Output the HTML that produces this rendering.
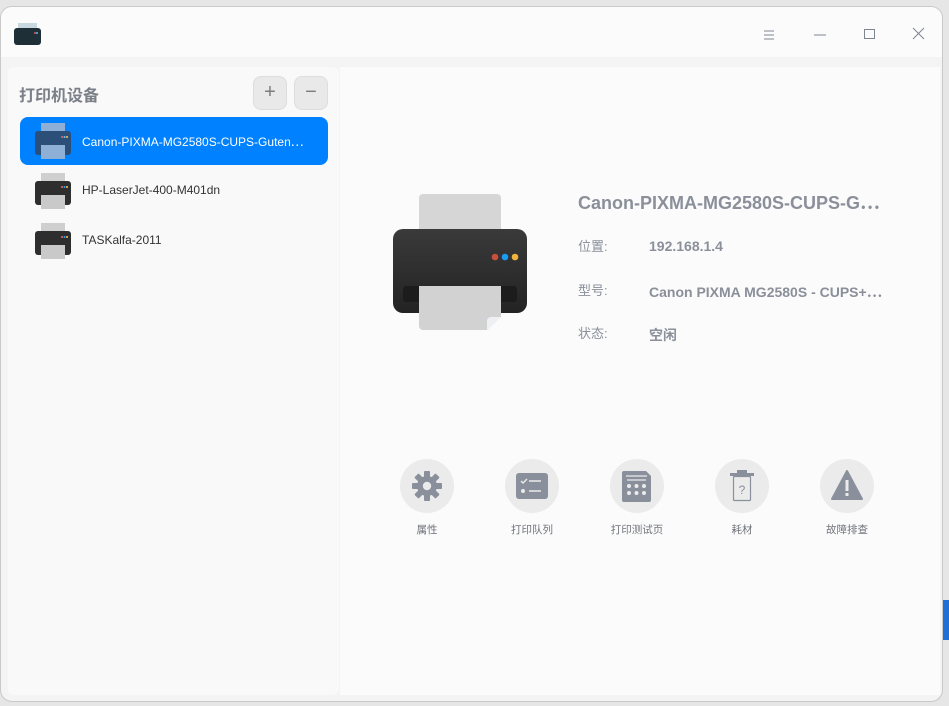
<!DOCTYPE html>
<html><head><meta charset="utf-8"><style>
*{margin:0;padding:0;box-sizing:border-box}
body{width:949px;height:706px;overflow:hidden;background:#f0f0f0;font-family:"Liberation Sans","Noto Sans CJK SC",sans-serif;position:relative}
.bg1{position:absolute;left:0;top:0;width:949px;height:706px;background:#e6e6e6}
.blue{position:absolute;left:942px;top:600px;width:7px;height:40px;background:#1f6fd6}
.win{position:absolute;left:0;top:6px;width:943px;height:696px;background:#f4f4f4;border-radius:12px;border:1px solid #c9c9c9;overflow:hidden}
.title{position:absolute;left:0;top:0;width:100%;height:50px;background:#fbfbfb}
.left{position:absolute;left:7px;top:60px;width:331px;height:628px;background:#f9f9f9;border-radius:6px}
.right{position:absolute;left:339px;top:60px;width:600px;height:628px;background:#fbfbfb}
.abs{position:absolute}
.h{left:18px;top:75px;font-size:16px;font-weight:bold;color:#7a7f88}
.btn{width:34px;height:34px;border-radius:8px;background:#e9e9e9;border:1px solid #ddd;color:#7c7c7c;font-size:20px;text-align:center;line-height:31px}
.row{left:19px;width:308px;height:48px;border-radius:8px}
.row .t{position:absolute;left:62px;top:16px;font-size:12px;color:#333}
.lbl{font-size:13px;color:#8a8f9a}
.val{font-size:14px;font-weight:bold;color:#8a8f9a}
.circ{width:54px;height:54px;border-radius:50%;background:#ebebeb}
.cap{font-size:10.5px;color:#6f737a;width:100px;text-align:center}
</style></head><body>
<div class="bg1"></div><div class="blue"></div>
<div class="win">
<div class="title"></div>
<svg class="abs" style="left:12px;top:14px" width="29" height="26"><rect x="5" y="2" width="19" height="8" fill="#c8d8e0"/><rect x="1" y="7" width="27" height="17" rx="3" fill="#1f2f38"/><circle cx="22" cy="12" r="1" fill="#e55"/><circle cx="24" cy="12" r="1" fill="#5be"/></svg>
<svg class="abs" style="left:762px;top:21px" width="14" height="14"><path d="M1 3h10M1 7h10M1 11h10" stroke="#7f8590" stroke-width="1"/></svg>
<svg class="abs" style="left:812px;top:21px" width="14" height="14"><path d="M1 7h12" stroke="#7f8590"/></svg>
<svg class="abs" style="left:862px;top:21px" width="14" height="14"><rect x="1.5" y="1.5" width="10" height="9" fill="none" stroke="#7f8590"/></svg>
<svg class="abs" style="left:911px;top:20px" width="14" height="14"><path d="M1 1l11 11M12 1L1 12" stroke="#7f8590"/></svg>
<div class="left"></div>
<div class="right"></div>
<div class="abs h">打印机设备</div>
<div class="abs btn" style="left:252px;top:69px">+</div>
<div class="abs btn" style="left:293px;top:69px">−</div>
<div class="abs row" style="top:110px;background:#0081ff"><svg class="abs" style="left:14px;top:6px" width="38" height="36"><rect x="7" y="0" width="24" height="10" fill="#8fb0d6"/><rect x="1" y="8" width="36" height="24" rx="3" fill="#2c4f7a"/><rect x="7" y="22" width="24" height="14" fill="#8fb0d6"/><circle cx="28" cy="14" r="1" fill="#e66"/><circle cx="30.5" cy="14" r="1" fill="#6cf"/><circle cx="33" cy="14" r="1" fill="#fc5"/></svg><div class="t" style="color:#fff">Canon-PIXMA-MG2580S-CUPS-Guten⋯</div></div>
<div class="abs row" style="top:160px"><svg class="abs" style="left:14px;top:6px" width="38" height="36"><rect x="7" y="0" width="24" height="10" fill="#cfcfcf"/><rect x="1" y="8" width="36" height="24" rx="3" fill="#2e2e2e"/><rect x="7" y="22" width="24" height="14" fill="#c9c9c9"/><circle cx="28" cy="14" r="1" fill="#e66"/><circle cx="30.5" cy="14" r="1" fill="#3af"/><circle cx="33" cy="14" r="1" fill="#fc5"/></svg><div class="t">HP-LaserJet-400-M401dn</div></div>
<div class="abs row" style="top:210px"><svg class="abs" style="left:14px;top:6px" width="38" height="36"><rect x="7" y="0" width="24" height="10" fill="#cfcfcf"/><rect x="1" y="8" width="36" height="24" rx="3" fill="#2e2e2e"/><rect x="7" y="22" width="24" height="14" fill="#c9c9c9"/><circle cx="28" cy="14" r="1" fill="#e66"/><circle cx="30.5" cy="14" r="1" fill="#3af"/><circle cx="33" cy="14" r="1" fill="#fc5"/></svg><div class="t">TASKalfa-2011</div></div>

<svg class="abs" style="left:388px;top:184px" width="150" height="155"><defs><linearGradient id="g" x1="0" y1="0" x2="0" y2="1"><stop offset="0" stop-color="#3a3a3a"/><stop offset="1" stop-color="#232323"/></linearGradient></defs>
<rect x="30" y="3" width="82" height="50" rx="4" fill="#d6d6d6"/>
<rect x="4" y="38" width="134" height="84" rx="10" fill="url(#g)"/>
<rect x="14" y="95" width="114" height="16" rx="3" fill="#1c1c1c"/>
<circle cx="106" cy="66" r="3.3" fill="#c9503f"/><circle cx="116" cy="66" r="3.3" fill="#1a9cf5"/><circle cx="126" cy="66" r="3.3" fill="#f2b33d"/>
<path d="M30 95h82v31l-14 13H34a4 4 0 0 1-4-4z" fill="#d2d2d2"/><path d="M98 139l14-13h-10a4 4 0 0 0-4 4z" fill="#eef0f4"/></svg>

<div class="abs" style="left:577px;top:182px;font-size:18px;font-weight:bold;color:#8a8f9a">Canon-PIXMA-MG2580S-CUPS-G⋯</div>
<div class="abs lbl" style="left:577px;top:229px">位置:</div><div class="abs val" style="left:648px;top:231px">192.168.1.4</div>
<div class="abs lbl" style="left:577px;top:273px">型号:</div><div class="abs val" style="left:648px;top:275px">Canon PIXMA MG2580S - CUPS+⋯</div>
<div class="abs lbl" style="left:577px;top:316px">状态:</div><div class="abs val" style="left:648px;top:318px">空闲</div>

<div class="abs circ" style="left:399px;top:452px"><svg width="54" height="54"><g transform="translate(27 27)" fill="#8a8f9c"><circle r="10"/><g id="tt"><rect x="-3" y="-15" width="6" height="30" rx="1"/></g><use href="#tt" transform="rotate(45)"/><use href="#tt" transform="rotate(90)"/><use href="#tt" transform="rotate(135)"/><circle r="4.2" fill="#ebebeb"/></g></svg></div>
<div class="abs circ" style="left:504px;top:452px"><svg width="54" height="54"><rect x="11" y="14" width="32" height="26" rx="3" fill="#8a8f9c"/><path d="M16 22l2 2 4-4M24 22h12M24 32h12" stroke="#ebebeb" stroke-width="1.4" fill="none"/><circle cx="18" cy="32" r="2" fill="#ebebeb"/></svg></div>
<div class="abs circ" style="left:609px;top:452px"><svg width="54" height="54"><path d="M14 12h22l5 5v24a2 2 0 0 1-2 2H14a2 2 0 0 1-2-2V14a2 2 0 0 1 2-2z" fill="#8a8f9c"/><path d="M16 17h21M17 21h19" stroke="#ebebeb" stroke-width="1.3"/><g fill="#ebebeb"><circle cx="19" cy="27" r="2"/><circle cx="26.5" cy="27" r="2"/><circle cx="34" cy="27" r="2"/><circle cx="19" cy="34" r="2"/><circle cx="26.5" cy="34" r="2"/><circle cx="34" cy="34" r="2"/></g></svg></div>
<div class="abs circ" style="left:714px;top:452px"><svg width="54" height="54"><rect x="22" y="11" width="10" height="3" fill="#8a8f9c"/><rect x="15" y="14" width="24" height="3" fill="#8a8f9c"/><rect x="18.5" y="17.5" width="17" height="24" rx="1" fill="none" stroke="#8a8f9c" stroke-width="1.2"/><text x="27" y="35" font-size="12" text-anchor="middle" fill="#8a8f9c" font-family="Liberation Sans">?</text></svg></div>
<div class="abs circ" style="left:819px;top:452px"><svg width="54" height="54"><path d="M27 12L42 40H12z" fill="#8a8f9c" stroke="#8a8f9c" stroke-linejoin="round" stroke-width="2"/><rect x="25.5" y="21" width="3" height="11" fill="#ebebeb"/><rect x="25.5" y="34" width="3" height="3" fill="#ebebeb"/></svg></div>
<div class="abs cap" style="left:376px;top:515px">属性</div>
<div class="abs cap" style="left:481px;top:515px">打印队列</div>
<div class="abs cap" style="left:586px;top:515px">打印测试页</div>
<div class="abs cap" style="left:691px;top:515px">耗材</div>
<div class="abs cap" style="left:796px;top:515px">故障排查</div>
</div>
</body></html>
